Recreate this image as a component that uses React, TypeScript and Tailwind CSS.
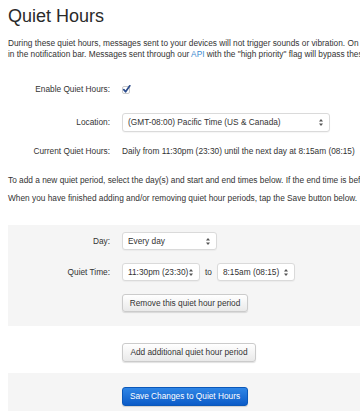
import React from 'react';

function Arrows() {
  return (
    <svg width="4" height="7" viewBox="0 0 4 7" className="shrink-0">
      <path d="M2 0 L4 2.6 L0 2.6 Z" fill="#555" />
      <path d="M2 7 L4 4.4 L0 4.4 Z" fill="#555" />
    </svg>
  );
}

function FakeSelect({ value, width }: { value: string; width: string }) {
  return (
    <div
      className={`${width} h-full flex items-center justify-between pl-[5px] pr-[6px] bg-white border border-[#dadada] rounded-[3px] shadow-[0_1px_1px_rgba(0,0,0,0.04)] whitespace-nowrap`}
    >
      <span>{value}</span>
      <Arrows />
    </div>
  );
}

function Row({ label, height, className = '', children }: { label?: string; height: string; className?: string; children: React.ReactNode }) {
  return (
    <div className={`flex items-center ${height} ${className}`}>
      <div className="w-[102px] shrink-0 text-right whitespace-nowrap">{label}</div>
      <div className="ml-[12px] flex items-center h-full">{children}</div>
    </div>
  );
}

function Button({ children, width, primary }: { children: React.ReactNode; width: string; primary?: boolean }) {
  return (
    <div
      className={
        primary
          ? `${width} h-full flex items-center justify-center rounded-[3px] border border-[#0b58b9] bg-gradient-to-b from-[#2f86e6] to-[#0a5bc8] text-white shadow-[0_1px_1px_rgba(0,0,0,0.15)] whitespace-nowrap`
          : `${width} h-full flex items-center justify-center rounded-[3px] border border-[#cbcbcb] bg-gradient-to-b from-white to-[#e9e9e9] text-[#333] shadow-[0_1px_1px_rgba(0,0,0,0.12)] whitespace-nowrap`
      }
    >
      {children}
    </div>
  );
}

export default function App() {
  return (
    <div className="w-[360px] h-[411px] overflow-hidden bg-white text-[#333] font-['Liberation_Sans',Arial,sans-serif] text-[8.3px]">
      <div className="w-[640px] pl-[8px]">
        <h1 className="pt-[6px] text-[18px] leading-[20px] font-normal text-[#2a2a2a]">Quiet Hours</h1>

        <div className="mt-[12px] leading-[11px] whitespace-nowrap">
          <div>During these quiet hours, messages sent to your devices will not trigger sounds or vibration. On iOS, notifications will still appear</div>
          <div>
            in the notification bar. Messages sent through our <span className="text-[#3d8bd0]">API</span> with the "high priority" flag will bypass these settings.
          </div>
        </div>

        <Row label="Enable Quiet Hours:" height="h-[19px]" className="mt-[20px]">
          <svg width="9" height="9" viewBox="0 0 9 9">
            <rect x="0.5" y="1.5" width="7" height="7" rx="1.5" fill="#fff" stroke="#c9c9c9" />
            <path d="M1.8 4.6 L3.6 6.8 L7.8 0.8" fill="none" stroke="#2b4c8c" strokeWidth="1.7" strokeLinecap="round" strokeLinejoin="round" />
          </svg>
        </Row>

        <Row label="Location:" height="h-[19px]" className="mt-[14px]">
          <FakeSelect value="(GMT-08:00) Pacific Time (US & Canada)" width="w-[208px]" />
        </Row>

        <Row label="Current Quiet Hours:" height="h-[19px]" className="mt-[10px]">
          <span className="whitespace-nowrap">Daily from 11:30pm (23:30) until the next day at 8:15am (08:15)</span>
        </Row>

        <div className="mt-[14px] leading-[11px] whitespace-nowrap">
          To add a new quiet period, select the day(s) and start and end times below. If the end time is before the start time, it ends the next day.
        </div>
        <div className="mt-[7px] leading-[11px] whitespace-nowrap">
          When you have finished adding and/or removing quiet hour periods, tap the Save button below.
        </div>

        <div className="mt-[21px] bg-[#f5f5f5] pt-[7px] pb-[14px]">
          <Row label="Day:" height="h-[18px]">
            <FakeSelect value="Every day" width="w-[95px]" />
          </Row>
          <Row label="Quiet Time:" height="h-[18px]" className="mt-[13px]">
            <FakeSelect value="11:30pm (23:30)" width="w-[78px]" />
            <span className="mx-[5px]">to</span>
            <FakeSelect value="8:15am (08:15)" width="w-[78px]" />
          </Row>
          <Row height="h-[18px]" className="mt-[13px]">
            <Button width="w-[126px]">Remove this quiet hour period</Button>
          </Row>
        </div>

        <Row height="h-[19px]" className="mt-[17px]">
          <Button width="w-[134px]">Add additional quiet hour period</Button>
        </Row>

        <div className="mt-[11px] bg-[#f5f5f5] pt-[14px] pb-[10px]">
          <Row height="h-[19px]">
            <Button width="w-[126px]" primary>
              Save Changes to Quiet Hours
            </Button>
          </Row>
        </div>
      </div>
    </div>
  );
}
